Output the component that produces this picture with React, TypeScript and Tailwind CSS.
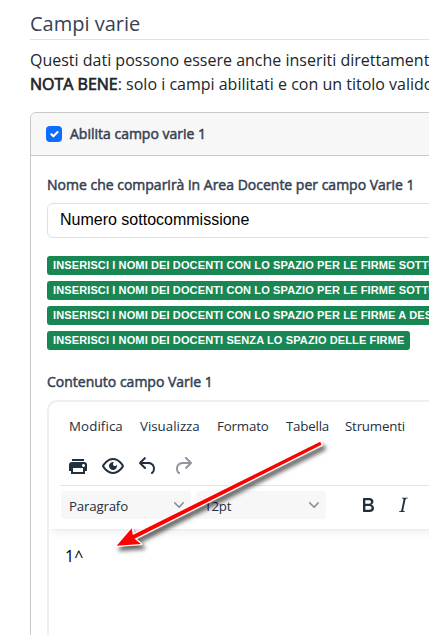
import React from 'react';

const badges = [
  'INSERISCI I NOMI DEI DOCENTI CON LO SPAZIO PER LE FIRME SOTTO',
  'INSERISCI I NOMI DEI DOCENTI CON LO SPAZIO PER LE FIRME SOTTO',
  'INSERISCI I NOMI DEI DOCENTI CON LO SPAZIO PER LE FIRME A DESTRA',
  'INSERISCI I NOMI DEI DOCENTI SENZA LO SPAZIO DELLE FIRME',
];

const menuItems = [
  { label: 'Modifica', className: 'w-[71px] tracking-[0.1px]' },
  { label: 'Visualizza', className: 'w-[77px]' },
  { label: 'Formato', className: 'w-[69px] tracking-[-0.15px]' },
  { label: 'Tabella', className: 'w-[59px] tracking-[-0.2px]' },
  { label: 'Strumenti', className: 'w-[76px] tracking-[-0.2px]' },
];

const icons = {
  print:
    'M18 8H6a3 3 0 0 0-3 3v6h2v3h14v-3h2v-6a3 3 0 0 0-3-3Zm-1 10H7v-4h10v4Zm.5-5c-.8 0-1.5-.7-1.5-1.5s.7-1.5 1.5-1.5 1.5.7 1.5 1.5-.7 1.5-1.5 1.5Zm.5-8H6v2h12V5Z',
  preview:
    'M3.5 12.5c.5.8 1.1 1.6 1.8 2.3 2 2 4.2 3.2 6.7 3.2s4.7-1.2 6.7-3.2a16.2 16.2 0 0 0 2.1-2.8 15.7 15.7 0 0 0-2.1-2.8c-2-2-4.2-3.2-6.7-3.2a9.3 9.3 0 0 0-6.7 3.2A16.2 16.2 0 0 0 3.2 12c0 .2.2.3.3.5Zm-2.4-1 .7-1.2L4 7.8C6.2 5.4 8.9 4 12 4c3 0 5.8 1.4 8.1 3.8a18.2 18.2 0 0 1 2.8 3.7v1l-.7 1.2a18.1 18.1 0 0 1-2.1 2.5c-2.3 2.4-5 3.8-8.1 3.8-3 0-5.8-1.4-8.1-3.8a18.2 18.2 0 0 1-2.8-3.7 1 1 0 0 1 0-1Zm12-3.3a2 2 0 1 0 2.7 2.6 4 4 0 1 1-2.6-2.6Z',
  undo: 'M6.4 8H12c3.7 0 6.2 2 6.8 5.1.6 2.7-.4 5.6-2.3 6.8a1 1 0 0 1-1-1.8c1.1-.6 1.8-2.7 1.4-4.6-.5-2.1-2.1-3.5-4.9-3.5H6.4l3.3 3.3a1 1 0 1 1-1.4 1.4l-5-5a1 1 0 0 1 0-1.4l5-5a1 1 0 0 1 1.4 1.4L6.4 8Z',
  redo: 'M17.6 10H12c-2.8 0-4.4 1.4-4.9 3.5-.4 2 .3 4 1.4 4.6a1 1 0 1 1-1 1.8c-2-1.2-2.9-4.1-2.3-6.8.6-3 3-5.1 6.8-5.1h5.6l-3.3-3.3a1 1 0 1 1 1.4-1.4l5 5a1 1 0 0 1 0 1.4l-5 5a1 1 0 0 1-1.4-1.4l3.3-3.3Z',
  bold: 'M7.8 19c-.3 0-.5 0-.6-.2l-.2-.5V5.7c0-.2 0-.4.2-.5l.6-.2h5c1.5 0 2.7.3 3.5 1 .7.6 1.1 1.4 1.1 2.5a3 3 0 0 1-.6 1.9c-.4.6-1 1-1.6 1.2.4.1.9.3 1.3.6s.8.7 1 1.2c.4.4.5 1 .5 1.6 0 1.3-.4 2.3-1.3 3-.8.7-2.1 1-3.8 1H7.8Zm5-8.3c.6 0 1.2-.1 1.6-.5.4-.3.6-.7.6-1.3 0-1.1-.8-1.7-2.3-1.7H9.3v3.5h3.4Zm.5 6c.7 0 1.3-.1 1.7-.4.4-.4.6-.9.6-1.5s-.2-1-.7-1.4c-.4-.3-1-.4-2-.4H9.4v3.8h4Z',
  italic:
    'm16.7 4.7-.1.9h-.3c-.6 0-1 0-1.4.3-.3.3-.4.6-.5 1.1l-2.1 9.8v.6c0 .5.4.8 1.4.8h.2l-.2.8H8l.2-.8h.2c1.1 0 1.8-.5 2-1.5l2-9.8.1-.5c0-.6-.4-.8-1.4-.8h-.3l.2-.9h5.8Z',
};

const ToolbarButton: React.FC<{
  icon: keyof typeof icons;
  disabled?: boolean;
}> = ({ icon, disabled }) => (
  <button
    className={`flex h-7 w-[35px] items-center justify-center ${
      disabled ? 'opacity-50' : ''
    }`}
    disabled={disabled}
  >
    <svg width="24" height="24" viewBox="0 0 24 24" fill="#222f3e">
      <path fillRule="evenodd" d={icons[icon]} />
    </svg>
  </button>
);

const ToolbarSelect: React.FC<{ label: string }> = ({ label }) => (
  <button className="flex h-7 w-[130px] items-center justify-between rounded-[3px] bg-[#f7f7f7] pr-[7px] pl-2 text-[13.3px] tracking-[-0.2px] text-[#222f3e]">
    <span className="pt-1">{label}</span>
    <svg width="10" height="10" viewBox="0 0 10 10" fill="#222f3e" opacity="0.5">
      <path d="M8.7 2.2c.3-.3.8-.3 1 0 .4.4.4.9 0 1.2L5.7 7.8c-.3.3-.9.3-1.2 0L.2 3.4a.8.8 0 0 1 0-1.2c.3-.3.8-.3 1.1 0L5 6l3.7-3.8Z" />
    </svg>
  </button>
);

const FieldLabel: React.FC<{ children: React.ReactNode }> = ({ children }) => (
  <div className="text-[14px] leading-[21px] whitespace-nowrap text-[#364152] [-webkit-text-stroke:0.5px_#364152]">
    {children}
  </div>
);

const Editor = () => (
  <div className="mt-2 h-[400px] w-[600px] overflow-hidden rounded-[10px] border-2 border-[#eee] bg-white">
    <div className="relative h-[127px] pt-[9px] shadow-[0_2px_2px_-2px_rgba(34,47,62,.1),0_8px_8px_-4px_rgba(34,47,62,.07)]">
      <div className="flex h-8 items-center pl-5 text-[13.3px] text-[#222f3e]">
        {menuItems.map((item) => (
          <div key={item.label} className={`shrink-0 ${item.className}`}>
            {item.label}
          </div>
        ))}
      </div>
      <div className="ml-[11px] flex h-[43px] items-center border-b border-[#e3e3e3] pt-1">
        <ToolbarButton icon="print" />
        <ToolbarButton icon="preview" />
        <ToolbarButton icon="undo" />
        <ToolbarButton icon="redo" disabled />
      </div>
      <div className="ml-3 flex h-[38px] items-center gap-[5px]">
        <ToolbarSelect label="Paragrafo" />
        <ToolbarSelect label="12pt" />
        <div className="ml-[19px] flex">
          <ToolbarButton icon="bold" />
          <ToolbarButton icon="italic" />
        </div>
      </div>
    </div>
    <div className="px-4 pt-4 text-[16px] leading-[22px] text-black">1^</div>
  </div>
);

// Arrow drawn over the editor, pointing at its content
const Arrow = () => (
  <svg
    className="pointer-events-none absolute top-[430px] left-[100px] drop-shadow-[3px_4px_2px_rgba(0,0,0,0.6)]"
    width="240"
    height="130"
    viewBox="100 430 240 130"
  >
    <path
      d="M320.2 441.8 132.8 534.9 131.7 528.3 116.7 545.7 141 544 134.5 538.8 321.6 444.8Z"
      fill="#f00"
      stroke="#fff"
      strokeWidth="2.6"
      strokeLinejoin="round"
      paintOrder="stroke"
    />
  </svg>
);

const App = () => {
  return (
    <div className="relative h-[635px] w-full overflow-hidden bg-white pl-[30px] font-['Open_Sans','Noto_Sans',sans-serif]">
      <h2 className="h-10 border-b border-[#dee2e6] pt-3 text-[20px] leading-6 text-[#364152]">
        Campi varie
      </h2>
      <div className="mt-2 text-[16px] leading-6 whitespace-nowrap text-[#212529]">
        <div>Questi dati possono essere anche inseriti direttamente</div>
        <div>
          <span className="[-webkit-text-stroke:0.7px_#212529]">NOTA BENE</span>: solo i
          campi abilitati e con un titolo valido
        </div>
      </div>

      <div className="mt-4 w-[700px] rounded-md border border-[#c8c8c8]">
        <div className="flex h-[43px] items-center rounded-t-md border-b border-[#c8c8c8] bg-[#f7f7f7] pl-[15px]">
          <div className="mr-2 flex h-4 w-4 shrink-0 items-center justify-center rounded-[4px] bg-[#0d6efd]">
            <svg width="16" height="16" viewBox="0 0 16 16" fill="none">
              <path
                d="m5.3 8.2 2.1 2.1 4.2-4.3"
                stroke="#fff"
                strokeWidth="2.1"
                strokeLinecap="round"
                strokeLinejoin="round"
              />
            </svg>
          </div>
          <div className="-mt-px">
            <FieldLabel>Abilita campo varie 1</FieldLabel>
          </div>
        </div>
        <div className="pt-[18px] pl-4">
          <FieldLabel>Nome che comparirà in Area Docente per campo Varie 1</FieldLabel>
          <div className="mt-2 flex h-[35px] w-[600px] items-center rounded-md border border-[#dee2e6] pb-0.5 pl-3 font-['Liberation_Sans',Arial,sans-serif] text-[16px] text-black">
            Numero sottocommissione
          </div>
          <div className="mt-[18px] flex flex-col items-start gap-[6.5px] font-['Liberation_Sans',Arial,sans-serif] text-[11px] leading-[18.5px] font-bold tracking-[0.12px] whitespace-nowrap text-white">
            {badges.map((badge, i) => (
              <div key={i} className="h-[18.5px] rounded-[3px] bg-[#198754] px-1.5">
                {badge}
              </div>
            ))}
          </div>
          <div className="mt-[21.5px]">
            <FieldLabel>Contenuto campo Varie 1</FieldLabel>
          </div>
          <Editor />
        </div>
      </div>
      <Arrow />
    </div>
  );
};

export default App;
